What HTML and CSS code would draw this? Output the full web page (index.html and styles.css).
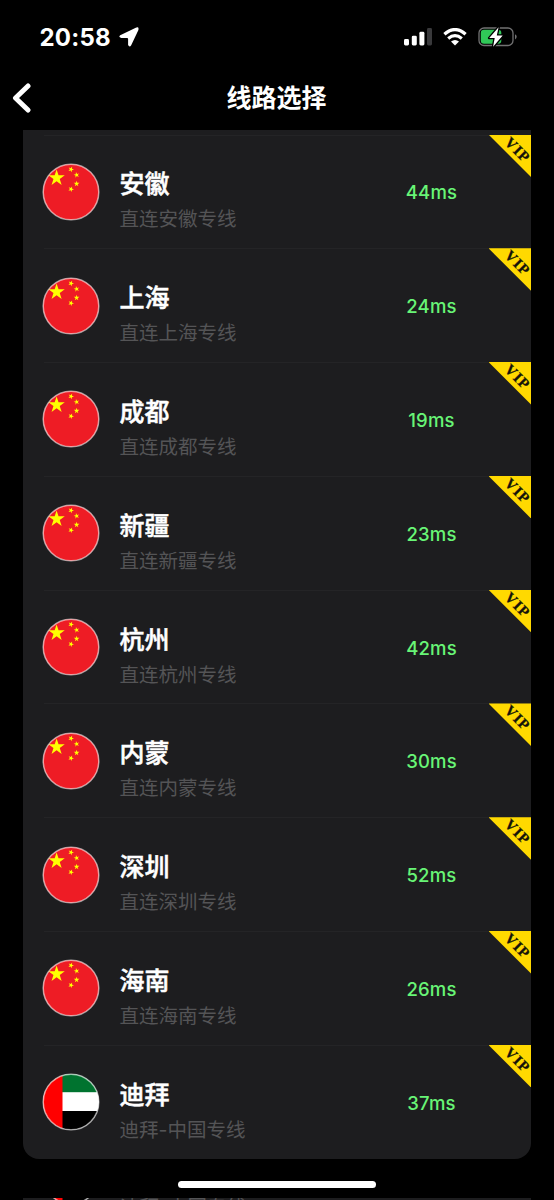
FILE: index.html
```html
<!DOCTYPE html>
<html lang="zh-CN">
<head>
<meta charset="utf-8">
<title>线路选择</title>
<link rel="stylesheet" href="styles.css">
</head>
<body>
<svg class="defs" width="0" height="0" aria-hidden="true">
  <defs>
    <clipPath id="disc"><circle cx="29" cy="29" r="28"/></clipPath>
    <polygon id="star" points="0,-1 .2245,-.309 .9511,-.309 .3633,.118 .5878,.809 0,.382 -.5878,.809 -.3633,.118 -.9511,-.309 -.2245,-.309"/>
    <symbol id="cn" viewBox="0 0 58 58">
      <circle cx="29" cy="29" r="28" fill="#ee1c25"/>
      <g fill="#ff0">
        <use href="#star" transform="translate(14.6 15) scale(8.6)"/>
        <use href="#star" transform="translate(29 6.4) rotate(22) scale(3)"/>
        <use href="#star" transform="translate(34.6 12) rotate(-12) scale(3)"/>
        <use href="#star" transform="translate(34.6 20.8) scale(3)"/>
        <use href="#star" transform="translate(29 26.2) rotate(22) scale(3)"/>
      </g>
      <circle cx="29" cy="29" r="27.8" fill="none" stroke="#fff" stroke-opacity=".58" stroke-width="1.5"/>
    </symbol>
    <symbol id="ae" viewBox="0 0 58 58">
      <g clip-path="url(#disc)">
        <rect width="58" height="58" fill="#fff"/>
        <rect width="58" height="19.2" fill="#00732f"/>
        <rect y="38" width="58" height="20" fill="#000"/>
        <rect width="20.5" height="58" fill="red"/>
      </g>
      <circle cx="29" cy="29" r="27.8" fill="none" stroke="#fff" stroke-opacity=".58" stroke-width="1.5"/>
    </symbol>
  </defs>
</svg>
<div class="screen">
  <header class="status">
    <div class="clock">20:58
      <svg class="location" viewBox="0 0 20 20"><path d="M1.2 8.2 16.8.7Q20.400-.6 19.300 3.2L12.200 18.300Q10.500 20.800 9.100 18V12Q9.100 11 8.100 11H2.300Q-1 10.200 1.200 8.200Z" fill="#fff"/></svg>
    </div>
    <div class="indicators">
      <svg width="28" height="18" viewBox="0 0 28 18" fill="#fff"><rect y="11" width="5" height="6.5" rx="1.4"/><rect x="7.8" y="7.7" width="5" height="9.8" rx="1.4"/><rect x="15.4" y="3.8" width="5" height="13.7" rx="1.4"/><rect x="23" y="0" width="5" height="17.5" rx="1.4" fill="#39393b"/></svg>
      <svg width="24" height="18" viewBox="0 0 24 18"><g fill="none" stroke="#fff" stroke-width="3.2"><path d="M1.4 6.3Q12-3.2 22.6 6.3"/><path d="M5.2 10.5Q12 4.8 18.8 10.5"/></g><path d="M12 17.6 8 13.6Q12 10.5 16 13.6Z" fill="#fff"/></svg>
      <svg width="39" height="22" viewBox="0 0 39 22"><rect x="1" y="2" width="34" height="17.5" rx="5" fill="none" stroke="#717172" stroke-width="1.3"/><path d="M37 8.2q1.700.8 1.700 2.600T37 13.400Z" fill="#717172"/><rect x="2.8" y="3.8" width="20.5" height="13.9" rx="3.2" fill="#30c858"/><path d="M20.6 1.2 11.2 12h5.500l-1.600 8.800L24.700 9.600h-5.900Z" fill="#fff" stroke="#000" stroke-width="2.6" paint-order="stroke" stroke-linejoin="round"/></svg>
    </div>
  </header>
  <nav class="nav">
    <svg class="back" viewBox="0 0 19 30"><path d="M16 3 3.5 15 16 27" fill="none" stroke="#fff" stroke-width="5" stroke-linecap="round" stroke-linejoin="round"/></svg>
    <h1 class="title">线路选择</h1>
    <span></span>
  </nav>
  <main class="card" id="routes">
    <article class="row"><svg class="flag"><use href="#cn"/></svg><div class="text"><h2 class="name">安徽</h2><p class="desc">直连安徽专线</p></div><span class="ping">44ms</span><span class="ribbon"><b class="vip">VIP</b></span></article>
    <article class="row"><svg class="flag"><use href="#cn"/></svg><div class="text"><h2 class="name">上海</h2><p class="desc">直连上海专线</p></div><span class="ping">24ms</span><span class="ribbon"><b class="vip">VIP</b></span></article>
    <article class="row"><svg class="flag"><use href="#cn"/></svg><div class="text"><h2 class="name">成都</h2><p class="desc">直连成都专线</p></div><span class="ping">19ms</span><span class="ribbon"><b class="vip">VIP</b></span></article>
    <article class="row"><svg class="flag"><use href="#cn"/></svg><div class="text"><h2 class="name">新疆</h2><p class="desc">直连新疆专线</p></div><span class="ping">23ms</span><span class="ribbon"><b class="vip">VIP</b></span></article>
    <article class="row"><svg class="flag"><use href="#cn"/></svg><div class="text"><h2 class="name">杭州</h2><p class="desc">直连杭州专线</p></div><span class="ping">42ms</span><span class="ribbon"><b class="vip">VIP</b></span></article>
    <article class="row"><svg class="flag"><use href="#cn"/></svg><div class="text"><h2 class="name">内蒙</h2><p class="desc">直连内蒙专线</p></div><span class="ping">30ms</span><span class="ribbon"><b class="vip">VIP</b></span></article>
    <article class="row"><svg class="flag"><use href="#cn"/></svg><div class="text"><h2 class="name">深圳</h2><p class="desc">直连深圳专线</p></div><span class="ping">52ms</span><span class="ribbon"><b class="vip">VIP</b></span></article>
    <article class="row"><svg class="flag"><use href="#cn"/></svg><div class="text"><h2 class="name">海南</h2><p class="desc">直连海南专线</p></div><span class="ping">26ms</span><span class="ribbon"><b class="vip">VIP</b></span></article>
    <article class="row"><svg class="flag"><use href="#ae"/></svg><div class="text"><h2 class="name">迪拜</h2><p class="desc">迪拜-中国专线</p></div><span class="ping">37ms</span><span class="ribbon"><b class="vip">VIP</b></span></article>
  </main>
  <div class="home"></div>
  <div class="peek"><svg class="peek-flag" viewBox="0 51 58 4"><use href="#ae" width="58" height="58"/></svg><p class="desc">迪拜-中国专线</p></div>
</div>
</body>
</html>
```
FILE: styles.css
```css
* { box-sizing: border-box; }
body { margin: 0; background: #000; color: #fff; font-family: Inter, "Noto Sans CJK SC", sans-serif; }
h1, h2, p { margin: 0; }
.defs { display: block; }
.screen { width: 554px; height: 1200px; overflow: hidden; display: flex; flex-direction: column; }
.status { flex: none; height: 74px; padding: 0 37px 0 39.5px; display: flex; justify-content: space-between; align-items: center; }
.clock { display: flex; align-items: center; gap: 8px; font-size: 24px; font-weight: 700; letter-spacing: .2px; }
.location { width: 20px; height: 20px; }
.indicators { display: flex; align-items: center; gap: 11px; }
.nav { flex: none; height: 55.5px; padding: 0 13px 7px 12px; display: grid; grid-template-columns: 19px 1fr 19px; align-items: center; }
.back { width: 19px; height: 30px; }
.title { text-align: center; font-size: 25px; line-height: 36px; font-weight: 700; }
.card { flex: none; margin: 0 23px; padding-top: 5px; background: #1d1d1f; border-radius: 0 0 16px 16px; }
.row { position: relative; height: 113.8px; padding: 1px 0 0 19px; display: grid; grid-template-columns: 77.500px 1fr 150px; align-items: center; }
.row::before { content: ""; position: absolute; left: 21px; right: 0; top: 0; height: 1px; background: #242426; }
.flag { width: 58px; height: 58px; }
.text { padding-top: 19px; }
.name { font-size: 25px; line-height: 36px; font-weight: 500; -webkit-text-stroke: .5px #fff; }
.desc { font-size: 19.5px; line-height: 34px; color: #545456; }
.ping { justify-self: center; padding-top: 1px; font-size: 18.5px; font-weight: 500; color: #68f576; letter-spacing: .2px; transform: translateX(-24.500px); }
.ribbon { position: absolute; top: 0; right: 0; width: 42.5px; height: 42.5px; background: #ffd900; clip-path: polygon(0 0, 100% 0, 100% 100%); }
.vip { position: absolute; left: 13.5px; top: 5px; width: 31px; line-height: 20px; text-align: center; font-family: "Liberation Serif", serif; font-size: 15px; letter-spacing: 1px; -webkit-text-stroke: .3px #15130a; color: #15130a; transform: rotate(45deg); }
.home { flex: none; width: 198px; height: 7px; margin: 22.5px auto 0; border-radius: 4px; background: #fff; }
.peek { flex: none; height: 2px; margin: 9.800px 23px 0; padding-left: 19px; display: flex; gap: 20px; overflow: hidden; background: #1d1d1f; }
.peek-flag { width: 58px; height: 4px; }
.peek .desc { margin-top: -8px; }
```
